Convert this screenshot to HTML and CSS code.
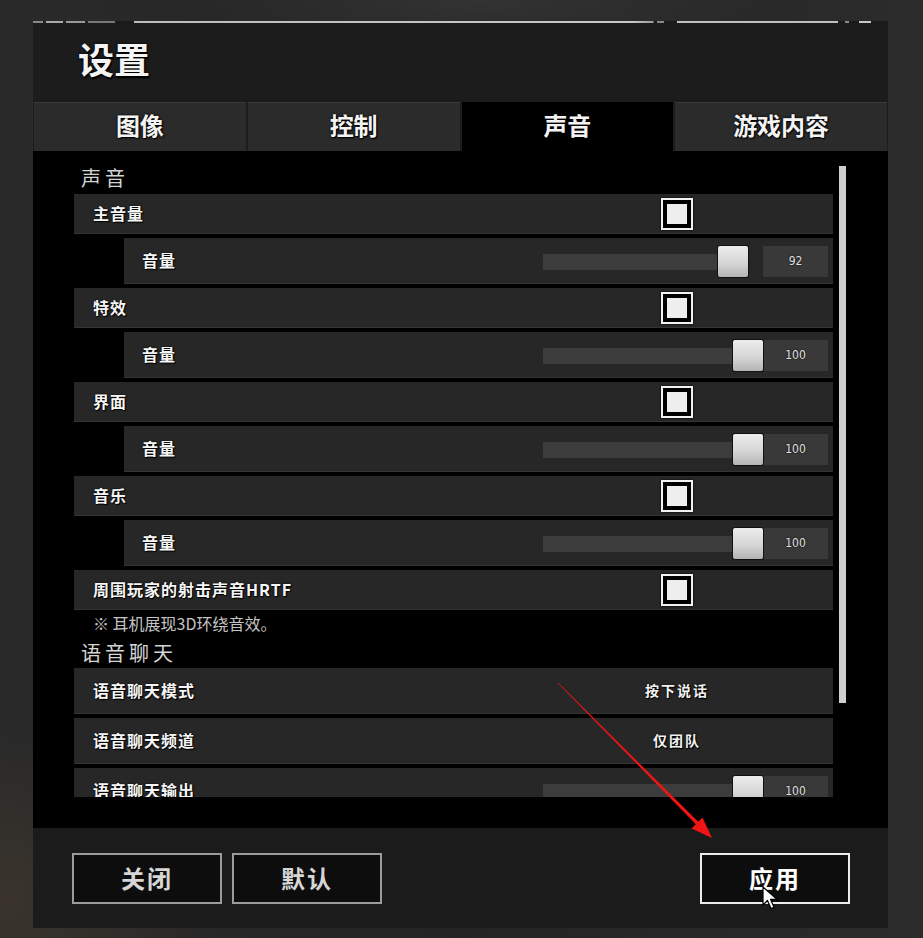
FILE: index.html
```html
<!DOCTYPE html>
<html lang="zh-CN">
<head>
<meta charset="utf-8">
<title>设置</title>
<link rel="stylesheet" href="styles.css">
</head>
<body>
<div class="screen">
  <div class="panel">
    <div class="deco"></div>
    <header class="head"><h1>设置</h1></header>
    <nav class="tabs">
      <div class="tab">图像</div>
      <div class="tab">控制</div>
      <div class="tab active">声音</div>
      <div class="tab">游戏内容</div>
    </nav>
    <main class="content">
      <div class="list">
        <div class="sec sec-first">声音</div>

        <div class="row main"><span class="label">主音量</span><span class="ctrl"><span class="check"><i></i></span></span></div>
        <div class="row sub"><span class="label">音量</span>
          <div class="slider"><div class="track"><div class="fill" style="width:205px"></div><div class="thumb" style="left:175px"></div></div><div class="val">92</div></div>
        </div>

        <div class="row main"><span class="label">特效</span><span class="ctrl"><span class="check"><i></i></span></span></div>
        <div class="row sub"><span class="label">音量</span>
          <div class="slider"><div class="track"><div class="fill" style="width:220px"></div><div class="thumb" style="left:190px"></div></div><div class="val">100</div></div>
        </div>

        <div class="row main"><span class="label">界面</span><span class="ctrl"><span class="check"><i></i></span></span></div>
        <div class="row sub"><span class="label">音量</span>
          <div class="slider"><div class="track"><div class="fill" style="width:220px"></div><div class="thumb" style="left:190px"></div></div><div class="val">100</div></div>
        </div>

        <div class="row main"><span class="label">音乐</span><span class="ctrl"><span class="check"><i></i></span></span></div>
        <div class="row sub"><span class="label">音量</span>
          <div class="slider"><div class="track"><div class="fill" style="width:220px"></div><div class="thumb" style="left:190px"></div></div><div class="val">100</div></div>
        </div>

        <div class="row main"><span class="label">周围玩家的射击声音HRTF</span><span class="ctrl"><span class="check"><i></i></span></span></div>
        <div class="note">※ 耳机展现3D环绕音效。</div>

        <div class="sec">语音聊天</div>
        <div class="row tall"><span class="label">语音聊天模式</span><span class="ctrl"><span class="opt">按下说话</span></span></div>
        <div class="row tall"><span class="label">语音聊天频道</span><span class="ctrl"><span class="opt">仅团队</span></span></div>
        <div class="row tall"><span class="label">语音聊天输出</span>
          <div class="slider"><div class="track"><div class="fill" style="width:220px"></div><div class="thumb" style="left:190px"></div></div><div class="val">100</div></div>
        </div>
      </div>
      <div class="scrollbar"></div>
    </main>
    <footer class="foot">
      <button class="btn">关闭</button>
      <button class="btn">默认</button>
      <span class="spacer"></span>
      <button class="btn primary">应用</button>
    </footer>
  </div>

  <svg class="overlay" width="923" height="938" viewBox="0 0 923 938">
    <polygon fill="#f01414" points="557.8,683.2 558.2,682.8 700.2,823.8 697.8,826.2"/>
    <polygon fill="#f01414" points="712,838 691.5,828.5 702.5,817.5"/>
    <path d="M763 887 L763 905 L767.5 900.5 L771 908.5 L774 907.2 L770.6 899.4 L777 899.4 Z" fill="#ffffff" stroke="#000000" stroke-width="1.2" stroke-linejoin="round"/>
  </svg>
</div>
</body>
</html>
```

FILE: styles.css
```css
* { box-sizing: border-box; }

html, body {
  margin: 0;
  padding: 0;
}

body {
  width: 923px;
  height: 938px;
  overflow: hidden;
  font-family: "Noto Sans CJK SC", "Noto Sans", "Liberation Sans", sans-serif;
  background: #262626;
}

.screen {
  position: relative;
  width: 923px;
  height: 938px;
  padding-top: 21px;
  background:
    radial-gradient(ellipse 220px 160px at 0px 900px, #3a342c 0%, rgba(58,52,44,0) 100%),
    radial-gradient(ellipse 300px 60px at 480px 0px, #333333 0%, rgba(51,51,51,0) 100%),
    linear-gradient(to right, #2a2a2a 0%, #242424 50%, #2c2c2c 100%);
}

.panel {
  margin-left: 33px;
  width: 855px;
  background: #1c1c1c;
}

.deco {
  height: 2px;
  background: linear-gradient(to right,
    #888 0px, #888 10px, #222 10px, #222 13px, #aaa 13px, #aaa 30px, #222 30px, #222 33px,
    #999 33px, #999 52px, #222 52px, #222 55px, #777 55px, #777 82px, #1a1a1a 82px, #1a1a1a 101px,
    #bdbdbd 101px, #c8c8c8 600px, #9a9a9a 620px, #1a1a1a 621px, #1a1a1a 624px, #888 624px, #888 631px,
    #1a1a1a 631px, #1a1a1a 644px, #c0c0c0 644px, #c0c0c0 805px, #1a1a1a 805px, #1a1a1a 812px,
    #888 812px, #888 816px, #1a1a1a 816px, #1a1a1a 826px, #c8c8c8 826px, #c8c8c8 838px,
    #1a1a1a 838px);
}

.head {
  height: 79px;
  padding: 13px 0 0 45px;
}

.head h1 {
  margin: 0;
  font-size: 36px;
  line-height: 44px;
  font-weight: 700;
  color: #f4f4f4;
  text-shadow: 0 0 3px #000, 1px 2px 1px #000;
}

.tabs {
  display: flex;
  gap: 2px;
  height: 49px;
  padding: 0 1px;
}

.tab {
  flex: 1;
  display: flex;
  align-items: center;
  justify-content: center;
  padding-bottom: 5px;
  background: #2b2b2b;
  border-top: 1px solid #3a3a3a;
  color: #f4f4f4;
  font-size: 24px;
  font-weight: 700;
  text-shadow: 0 0 3px #000, 1px 1px 1px #000;
}

.tab.active {
  background: #000;
  border-top-color: #000;
}

.content {
  display: flex;
  height: 677px;
  background: #000;
  padding-left: 41px;
}

.list {
  width: 759px;
  height: 646px;
  overflow: hidden;
}

.scrollbar {
  width: 7px;
  height: 537px;
  margin: 15px 0 0 6px;
  background: #cfcfcf;
}

.sec {
  padding: 5px 0 3px 7px;
  font-size: 20px;
  line-height: 24px;
  letter-spacing: 4px;
  color: #d4d4d4;
}

.sec-first {
  padding-top: 15px;
  padding-bottom: 4px;
}

.row {
  display: flex;
  align-items: center;
  height: 40px;
  margin-bottom: 4px;
  padding-bottom: 2px;
  background: #272727;
  box-shadow: inset 0 -1px 0 #343434;
}

.row.sub {
  height: 46px;
  margin-left: 50px;
}

.row.tall {
  height: 46px;
}

.label {
  flex: 1;
  padding-left: 19px;
  font-size: 16px;
  font-weight: 700;
  letter-spacing: 1px;
  color: #f6f6f6;
  text-shadow: 0 0 2px #000, 1px 1px 1px #000;
}

.row.sub .label {
  padding-left: 18px;
}

.ctrl {
  width: 160px;
  margin-right: 76px;
  display: flex;
  justify-content: center;
}

.row.main .ctrl {
  margin-top: 2px;
}

.check {
  width: 32px;
  height: 32px;
  border: 2px solid #f2f2f2;
  background: #000;
  padding: 4px;
  box-shadow: 0 0 2px #000;
}

.check i {
  display: block;
  width: 20px;
  height: 20px;
  background: #eeeeee;
}

.opt {
  font-size: 14px;
  font-weight: 700;
  letter-spacing: 2px;
  color: #f2f2f2;
  text-shadow: 0 0 2px #000, 1px 1px 1px #000;
}

.slider {
  display: flex;
  align-items: center;
  margin-right: 5px;
  margin-top: 2px;
}

.track {
  position: relative;
  width: 220px;
  height: 31px;
}

.fill {
  position: absolute;
  left: 0;
  top: 8px;
  height: 16px;
  background: #3c3c3c;
}

.thumb {
  position: absolute;
  top: 0;
  width: 30px;
  height: 31px;
  border-radius: 2px;
  background: linear-gradient(to bottom, #ececec 0%, #d6d6d6 55%, #b4b4b4 100%);
  box-shadow: 0 0 0 1px #111;
}

.val {
  width: 65px;
  height: 31px;
  line-height: 31px;
  text-align: center;
  background: #393939;
  font-family: "DejaVu Sans Condensed", "DejaVu Sans", "Liberation Sans", sans-serif;
  font-size: 12px;
  color: #e0e0e0;
  text-shadow: 0 0 2px #000;
}

.note {
  padding: 0 0 4px 19px;
  height: 22px;
  line-height: 18px;
  font-size: 16px;
  color: #c4c4c4;
  text-shadow: 0 0 2px #000;
}

.foot {
  display: flex;
  gap: 10px;
  height: 100px;
  padding: 25px 38px 0 39px;
  background: #1b1b1b;
}

.spacer {
  flex: 1;
}

.btn {
  width: 150px;
  height: 51px;
  padding: 0 0 3px 0;
  background: #0d0d0d;
  border: 2px solid #9c9c9c;
  color: #d6d6d6;
  font-family: "Noto Sans CJK SC", "Noto Sans", sans-serif;
  font-size: 24px;
  font-weight: 700;
  letter-spacing: 2px;
}

.btn.primary {
  border-color: #ececec;
  color: #ffffff;
}

.overlay {
  position: absolute;
  left: 0;
  top: 0;
  pointer-events: none;
}
```
